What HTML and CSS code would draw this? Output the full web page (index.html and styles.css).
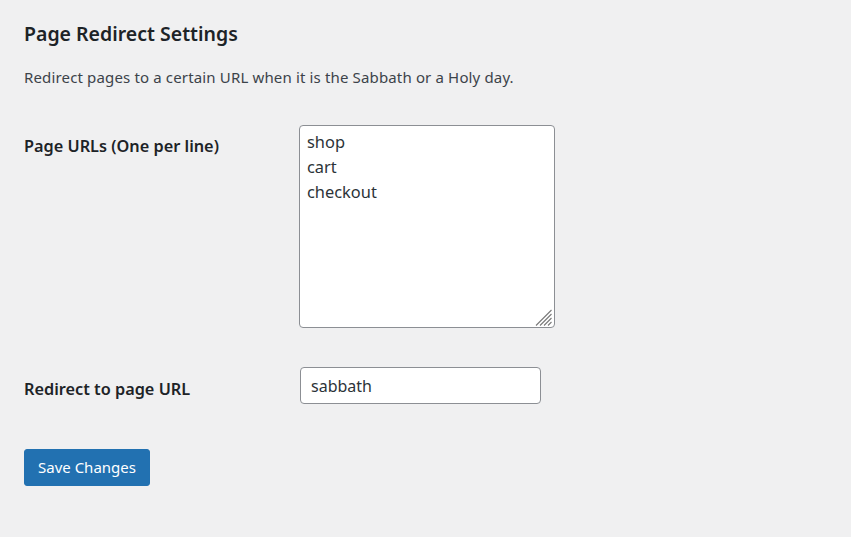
FILE: index.html
```html
<!DOCTYPE html>
<html lang="en">
<head>
<meta charset="utf-8">
<title>Page Redirect Settings</title>
<link rel="stylesheet" href="styles.css">
</head>
<body>
<div class="wrap">
  <h2 class="title">Page Redirect Settings</h2>
  <p class="desc">Redirect pages to a certain URL when it is the Sabbath or a Holy day.</p>
  <form class="form">
    <div class="row row-urls">
      <label class="label" for="urls">Page URLs (One per line)</label>
      <div class="textarea-wrap">
        <textarea id="urls" class="textarea">shop
cart
checkout</textarea>
        <svg class="grip" width="17" height="17" viewBox="0 0 17 17" aria-hidden="true">
          <path d="M1 16.5 L16.5 1 M5 16.5 L16.5 5 M9 16.5 L16.5 9 M13 16.5 L16.5 13" stroke="#7a7a7a" stroke-width="1.1" fill="none"/>
        </svg>
      </div>
    </div>
    <div class="row row-target">
      <label class="label" for="target">Redirect to page URL</label>
      <input id="target" class="input" type="text" value="sabbath">
    </div>
    <div class="submit">
      <button type="button" class="button">Save Changes</button>
    </div>
  </form>
</div>
</body>
</html>
```

FILE: styles.css
```css
html, body {
  margin: 0;
  padding: 0;
  background: #f0f0f1;
}
body {
  font-family: "Noto Sans", "Open Sans", sans-serif;
  color: #1d2327;
  width: 851px;
  height: 537px;
  overflow: hidden;
}
.wrap {
  padding: 20px 24px 0 24px;
}
.title {
  margin: 0;
  font-size: 19.5px;
  font-weight: 600;
  line-height: 28px;
  color: #1d2327;
}
.desc {
  margin: 17px 0 0 0;
  font-size: 15px;
  letter-spacing: 0.15px;
  line-height: 24px;
  color: #3c434a;
}
.form {
  margin-top: 36px;
}
.row {
  display: grid;
  grid-template-columns: 275px 1fr;
  align-items: start;
}
.row-target {
  margin-top: 39px;
}
.label {
  font-size: 16.3px;
  font-weight: 600;
  line-height: 24px;
  color: #1d2327;
}
.row-urls .label {
  padding-top: 9px;
}
.row-target .label {
  padding-top: 10px;
}
.textarea-wrap {
  position: relative;
  width: 256px;
  height: 203px;
}
.textarea {
  display: block;
  box-sizing: border-box;
  width: 256px;
  height: 203px;
  margin: 0;
  padding: 3px 7px;
  border: 1px solid #8c8f94;
  border-radius: 4px;
  background: #fff;
  font-family: inherit;
  font-size: 16.4px;
  line-height: 25px;
  color: #2c3338;
  resize: none;
  overflow: auto;
}
.grip {
  position: absolute;
  right: 3px;
  bottom: 2px;
  pointer-events: none;
}
.input {
  box-sizing: border-box;
  width: 241px;
  height: 37px;
  margin: 0 0 0 1px;
  padding: 0 10px;
  border: 1px solid #8c8f94;
  border-radius: 4px;
  background: #fff;
  font-family: inherit;
  font-size: 16px;
  color: #2c3338;
}
.submit {
  margin-top: 45px;
}
.button {
  box-sizing: border-box;
  height: 37px;
  padding: 0 13px;
  border: 1px solid #2271b1;
  border-radius: 3px;
  background: #2271b1;
  color: #fff;
  font-family: inherit;
  font-size: 15px;
  line-height: 35px;
  cursor: pointer;
}
```
